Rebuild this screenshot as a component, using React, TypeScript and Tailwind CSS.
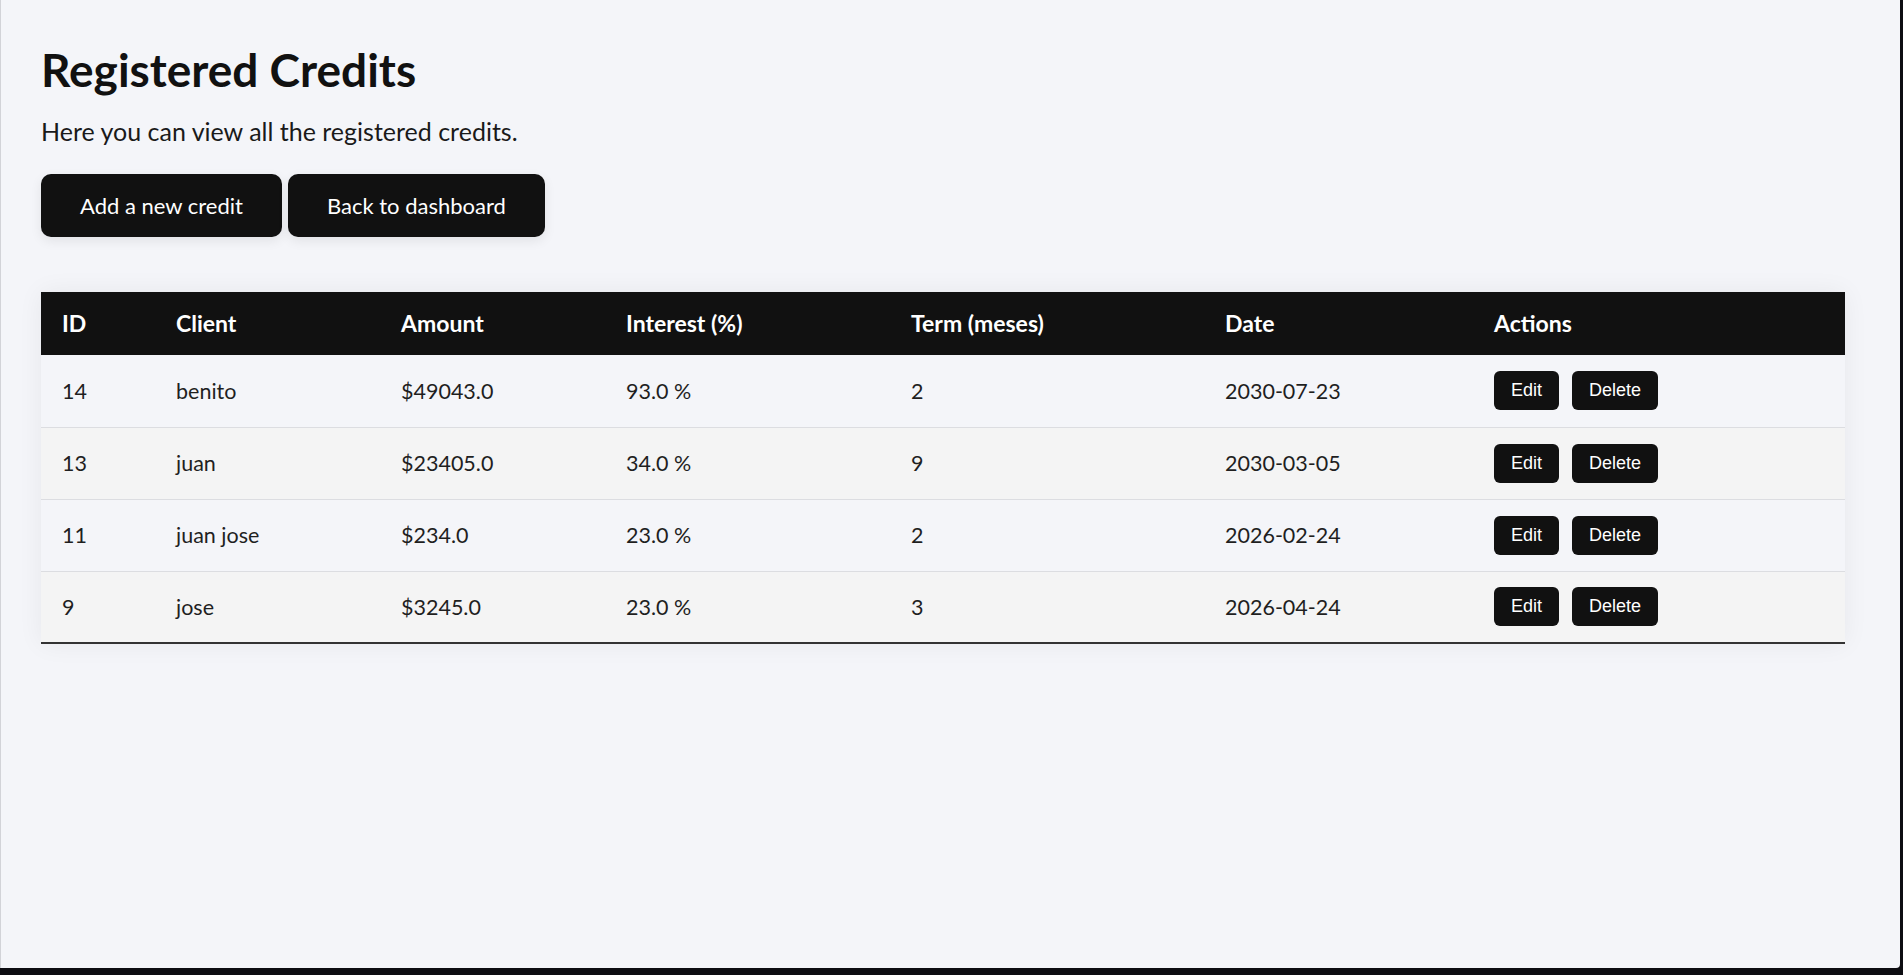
import React from 'react';

type Credit = {
    id: number;
    client: string;
    amount: string;
    interest: string;
    term: number;
    date: string;
};

const credits: Credit[] = [
    { id: 14, client: 'benito', amount: '$49043.0', interest: '93.0 %', term: 2, date: '2030-07-23' },
    { id: 13, client: 'juan', amount: '$23405.0', interest: '34.0 %', term: 9, date: '2030-03-05' },
    { id: 11, client: 'juan jose', amount: '$234.0', interest: '23.0 %', term: 2, date: '2026-02-24' },
    { id: 9, client: 'jose', amount: '$3245.0', interest: '23.0 %', term: 3, date: '2026-04-24' },
];

const headers = ['ID', 'Client', 'Amount', 'Interest (%)', 'Term (meses)', 'Date', 'Actions'];

const App = () => {
    return (
        <div className="min-h-screen bg-[#0d0d12] font-['Lato',sans-serif]">
            {/* page area; the dark strip right and below is the window frame */}
            <div className="w-[1900px] h-[968px] bg-[#f4f5f9] border-l border-[#d2d3d8] rounded-br-[4px] overflow-hidden px-[40px] pt-[42px]">
                <h1 className="text-[46px] leading-[55px] font-bold text-[#111111]">Registered Credits</h1>
                <p className="mt-[19px] text-[25px] leading-[30px] text-[#1a1a1a]">
                    Here you can view all the registered credits.
                </p>

                <div className="mt-[28px] flex gap-[6px]">
                    <button className="h-[63px] px-[39px] rounded-[10px] bg-[#111111] text-white text-[22px] shadow-[0_4px_12px_rgba(0,0,0,0.08)]">
                        Add a new credit
                    </button>
                    <button className="h-[63px] px-[39px] rounded-[10px] bg-[#111111] text-white text-[22px] shadow-[0_4px_12px_rgba(0,0,0,0.08)]">
                        Back to dashboard
                    </button>
                </div>

                <table className="mt-[55px] w-[1804px] table-fixed border-collapse shadow-[0_0_24px_rgba(0,0,0,0.06)] border-b-2 border-[#333333]">
                    <colgroup>
                        <col className="w-[114px]" />
                        <col className="w-[225px]" />
                        <col className="w-[225px]" />
                        <col className="w-[285px]" />
                        <col className="w-[314px]" />
                        <col className="w-[269px]" />
                        <col />
                    </colgroup>
                    <thead>
                        <tr className="bg-[#111111] h-[63px]">
                            {headers.map((h) => (
                                <th key={h} className="pl-[21px] text-left text-[23px] font-bold text-white">
                                    {h}
                                </th>
                            ))}
                        </tr>
                    </thead>
                    <tbody>
                        {credits.map((c, i) => (
                            <tr
                                key={c.id}
                                className={`h-[72px] text-[21.5px] text-[#1f1f1f] ${i > 0 ? 'border-t border-[#dcdde1]' : ''} ${i % 2 === 1 ? 'bg-[#f4f4f4]' : 'bg-[#f4f5f9]'}`}
                            >
                                <td className="pl-[21px]">{c.id}</td>
                                <td className="pl-[21px]">{c.client}</td>
                                <td className="pl-[21px]">{c.amount}</td>
                                <td className="pl-[21px]">{c.interest}</td>
                                <td className="pl-[21px]">{c.term}</td>
                                <td className="pl-[21px]">{c.date}</td>
                                <td className="pl-[21px]">
                                    <div className="flex gap-[13px] font-['Liberation_Sans',Arial,sans-serif]">
                                        <button className="px-[17px] py-[9px] leading-[21px] text-[18px] rounded-[6px] bg-[#111111] text-white">
                                            Edit
                                        </button>
                                        <button className="px-[17px] py-[9px] leading-[21px] text-[18px] rounded-[6px] bg-[#111111] text-white">
                                            Delete
                                        </button>
                                    </div>
                                </td>
                            </tr>
                        ))}
                    </tbody>
                </table>
            </div>
        </div>
    );
};

export default App;
